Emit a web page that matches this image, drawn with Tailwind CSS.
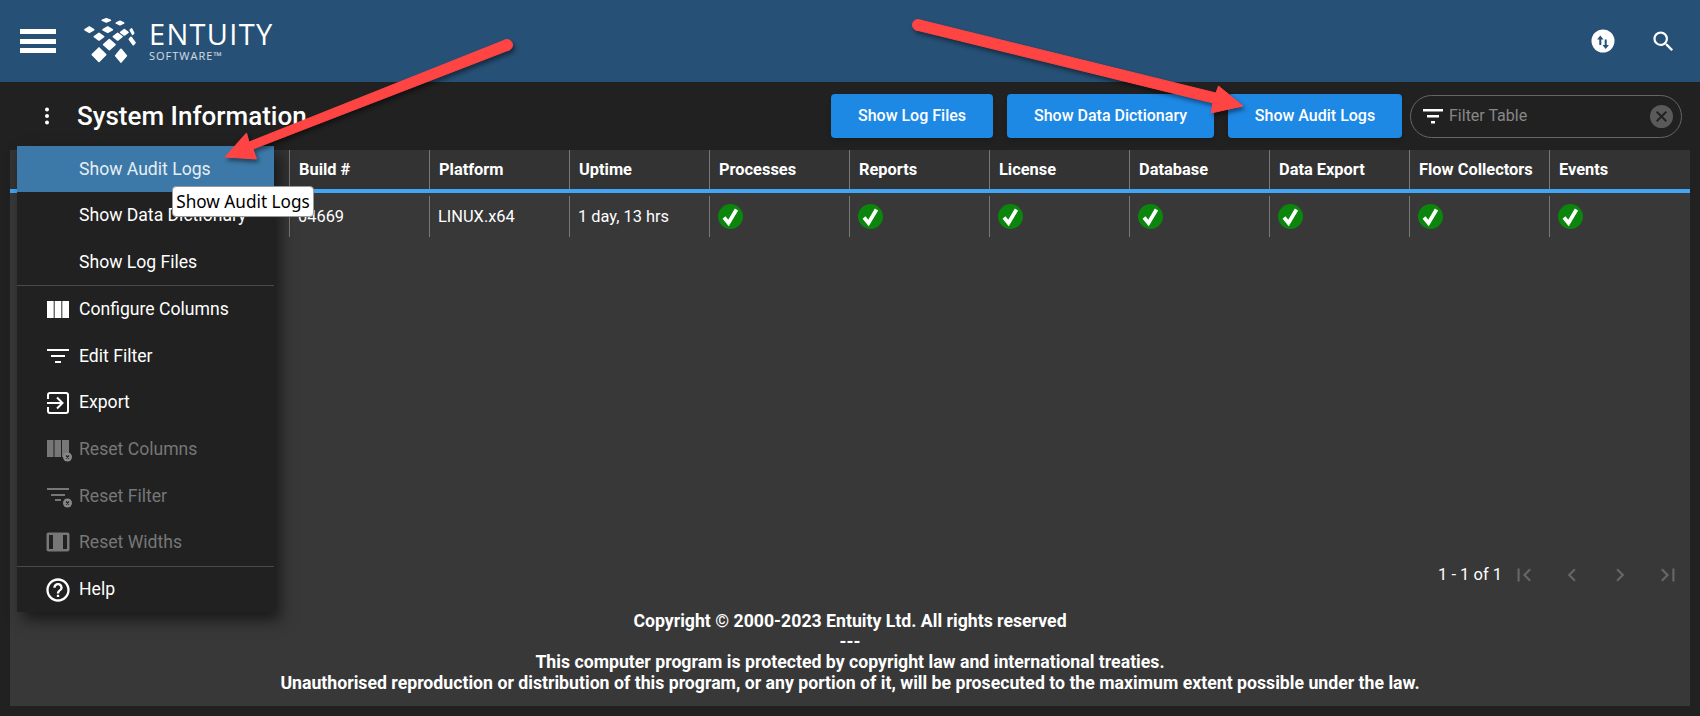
<!DOCTYPE html>
<html lang="en">
<head>
  <meta charset="UTF-8">
  <title>System Information</title>
  <script src="https://cdn.jsdelivr.net/npm/@tailwindcss/browser@4"></script>
</head>
<body class="bg-[#212121] font-['Roboto',sans-serif] text-white w-[1700px] h-[716px] overflow-hidden relative">
  <!-- Top bar -->
  <header class="h-[82px] bg-[#265075] flex items-center pl-5 pr-[23px]">
    <div class="w-9 h-6 flex flex-col justify-between">
      <div class="h-[5px] bg-white"></div>
      <div class="h-[5px] bg-white"></div>
      <div class="h-[5px] bg-white"></div>
    </div>
    <svg class="ml-[19px] w-[70px] h-[60px] -mt-[2px]" viewBox="0 0 210 180" fill="#fff" stroke="#fff" stroke-width="5" stroke-linejoin="round">
      <path d="M82 31l12-5 12 5-12 5z"/>
      <path d="M124 39l11-5 11 5-11 5z"/>
      <path d="M30 59l13-8 13 8-13 8z"/>
      <path d="M84 59l14-8 14 8-14 8z"/>
      <path d="M137 67l11-8 11 8-11 8z"/>
      <path d="M166 60l4-3 6 12-3 4z"/>
      <path d="M58 80l14-10 14 10-14 10z"/>
      <path d="M115 80l13-10 13 10-13 10z"/>
      <path d="M163 88l5-6 12 16-5 6z"/>
      <path d="M86 104l17-15 17 15-17 15z"/>
      <path d="M52 134l20-20 20 20-20 20z"/>
      <path d="M122 137l16-19 16 19-16 19z"/>
    </svg>
    <div class="ml-[4px] flex flex-col">
      <span class="font-['Open_Sans',sans-serif] text-[29px] leading-[28px] tracking-[1.300px]">ENTUITY</span>
      <span class="mt-[2px] font-['Open_Sans',sans-serif] text-[11px] leading-[12px] tracking-[1px] text-white/80">SOFTWARE™</span>
    </div>
    <div class="ml-auto flex items-center gap-[35px]">
      <svg class="w-6 h-6" viewBox="0 0 24 24"><circle cx="12" cy="12" r="11.500" fill="#fff"/><path d="M9.300 6.500l-3.200 4h2.200v5.500h2v-5.500h2.200zM14.700 20l3.200-4h-2.200v-5.500h-2V16h-2.200z" fill="#265075"/></svg>
      <svg class="w-[27px] h-[27px]" viewBox="0 0 24 24" fill="#fff"><path d="M15.500 14h-.79l-.28-.27A6.470 6.470 0 0 0 16 9.500 6.500 6.500 0 1 0 9.500 16c1.610 0 3.090-.59 4.230-1.570l.27.28v.79l5 4.990L20.490 19zm-6 0C7.010 14 5 11.990 5 9.500S7.010 5 9.500 5 14 7.010 14 9.500 11.990 14 9.500 14z"/></svg>
    </div>
  </header>

  <!-- Title and actions -->
  <div class="h-[68px] flex items-center pl-[35px] pr-[18px]">
    <svg class="w-6 h-6" viewBox="0 0 24 24" fill="#fff"><circle cx="12" cy="5.500" r="2"/><circle cx="12" cy="12" r="2"/><circle cx="12" cy="18.500" r="2"/></svg>
    <h1 class="ml-[18px] text-[26px] font-medium">System Information</h1>
    <div class="ml-auto flex items-center">
      <button class="w-[162px] h-11 bg-[#1e88e5] rounded text-base font-medium shadow-md">Show Log Files</button>
      <button class="ml-[14px] w-[207px] h-11 bg-[#1e88e5] rounded text-base font-medium shadow-md">Show Data Dictionary</button>
      <button class="ml-[14px] w-[174px] h-11 bg-[#1e88e5] rounded text-base font-medium shadow-md">Show Audit Logs</button>
      <div class="ml-2 w-[272px] h-[43px] rounded-full border border-[#666] flex items-center pl-[10px] pr-2">
        <svg class="w-6 h-6" viewBox="0 0 24 24" fill="#fff"><path d="M2 5h20v2.500H2zM6 11h12v2.500H6zM10 17h4v2.500h-4z"/></svg>
        <span class="ml-[4px] text-base text-[#888]">Filter Table</span>
        <svg class="ml-auto w-[23px] h-[23px]" viewBox="0 0 24 24"><circle cx="12" cy="12" r="12" fill="#5a5a5a"/><path d="M7 7l10 10M17 7L7 17" stroke="#212121" stroke-width="2"/></svg>
      </div>
    </div>
  </div>

  <!-- Table card -->
  <main class="mx-[10px] h-[556px] bg-[#383838] flex flex-col">
    <div class="h-[39px] bg-[#333] pl-[279px] grid grid-cols-[repeat(10,140px)] text-[16.400px] font-bold">
      <div class="border-l border-[#777] px-[9px] leading-[39px]">Build #</div>
      <div class="border-l border-[#777] px-[9px] leading-[39px]">Platform</div>
      <div class="border-l border-[#777] px-[9px] leading-[39px]">Uptime</div>
      <div class="border-l border-[#777] px-[9px] leading-[39px]">Processes</div>
      <div class="border-l border-[#777] px-[9px] leading-[39px]">Reports</div>
      <div class="border-l border-[#777] px-[9px] leading-[39px]">License</div>
      <div class="border-l border-[#777] px-[9px] leading-[39px]">Database</div>
      <div class="border-l border-[#777] px-[9px] leading-[39px]">Data Export</div>
      <div class="border-l border-[#777] px-[9px] leading-[39px]">Flow Collectors</div>
      <div class="border-l border-[#777] px-[9px] leading-[39px]">Events</div>
    </div>
    <div class="h-1 bg-[#42a5f5]"></div>
    <div class="mt-[3px] h-[41px] pl-[279px] grid grid-cols-[repeat(10,140px)] text-[16.400px]">
      <div class="border-l border-[#777] px-2 leading-[41px]">04669</div>
      <div class="border-l border-[#777] px-2 leading-[41px]">LINUX.x64</div>
      <div class="border-l border-[#777] px-2 leading-[41px]">1 day, 13 hrs</div>
      <div class="border-l border-[#777] px-2 flex items-center"><svg class="w-[25px] h-[25px]" viewBox="0 0 25 25"><circle cx="12.500" cy="12.500" r="12.500" fill="#0b850b"/><path d="M6 13.500l4.500 5.500 8-13.500" fill="none" stroke="#fff" stroke-width="3.800"/></svg></div>
      <div class="border-l border-[#777] px-2 flex items-center"><svg class="w-[25px] h-[25px]" viewBox="0 0 25 25"><circle cx="12.500" cy="12.500" r="12.500" fill="#0b850b"/><path d="M6 13.500l4.500 5.500 8-13.500" fill="none" stroke="#fff" stroke-width="3.800"/></svg></div>
      <div class="border-l border-[#777] px-2 flex items-center"><svg class="w-[25px] h-[25px]" viewBox="0 0 25 25"><circle cx="12.500" cy="12.500" r="12.500" fill="#0b850b"/><path d="M6 13.500l4.500 5.500 8-13.500" fill="none" stroke="#fff" stroke-width="3.800"/></svg></div>
      <div class="border-l border-[#777] px-2 flex items-center"><svg class="w-[25px] h-[25px]" viewBox="0 0 25 25"><circle cx="12.500" cy="12.500" r="12.500" fill="#0b850b"/><path d="M6 13.500l4.500 5.500 8-13.500" fill="none" stroke="#fff" stroke-width="3.800"/></svg></div>
      <div class="border-l border-[#777] px-2 flex items-center"><svg class="w-[25px] h-[25px]" viewBox="0 0 25 25"><circle cx="12.500" cy="12.500" r="12.500" fill="#0b850b"/><path d="M6 13.500l4.500 5.500 8-13.500" fill="none" stroke="#fff" stroke-width="3.800"/></svg></div>
      <div class="border-l border-[#777] px-2 flex items-center"><svg class="w-[25px] h-[25px]" viewBox="0 0 25 25"><circle cx="12.500" cy="12.500" r="12.500" fill="#0b850b"/><path d="M6 13.500l4.500 5.500 8-13.500" fill="none" stroke="#fff" stroke-width="3.800"/></svg></div>
      <div class="border-l border-[#777] px-2 flex items-center"><svg class="w-[25px] h-[25px]" viewBox="0 0 25 25"><circle cx="12.500" cy="12.500" r="12.500" fill="#0b850b"/><path d="M6 13.500l4.500 5.500 8-13.500" fill="none" stroke="#fff" stroke-width="3.800"/></svg></div>
    </div>
    <!-- Pagination -->
    <div class="mt-auto flex items-center justify-end pr-[9px]">
      <span class="text-[16.500px] mr-[9px]">1 - 1 of 1</span>
      <svg class="w-[26px] h-[26px]" viewBox="0 0 24 24" fill="#666"><path d="M18.410 16.590L13.820 12l4.590-4.590L17 6l-6 6 6 6zM6 6h2v12H6z"/></svg>
      <svg class="ml-[22px] w-[26px] h-[26px]" viewBox="0 0 24 24" fill="#666"><path d="M15.410 7.410L14 6l-6 6 6 6 1.410-1.410L10.830 12z"/></svg>
      <svg class="ml-[22px] w-[26px] h-[26px]" viewBox="0 0 24 24" fill="#666"><path d="M10 6L8.590 7.410 13.170 12l-4.580 4.590L10 18l6-6z"/></svg>
      <svg class="ml-[22px] w-[26px] h-[26px]" viewBox="0 0 24 24" fill="#666"><path d="M5.590 7.410L10.180 12l-4.590 4.590L7 18l6-6-6-6zM16 6h2v12h-2z"/></svg>
    </div>
    <!-- Copyright -->
    <footer class="mt-[23px] mb-[13px] text-center text-[17.700px] font-bold leading-[20.500px]">
      <p>Copyright © 2000-2023 Entuity Ltd. All rights reserved</p>
      <p>---</p>
      <p>This computer program is protected by copyright law and international treaties.</p>
      <p>Unauthorised reproduction or distribution of this program, or any portion of it, will be prosecuted to the maximum extent possible under the law.</p>
    </footer>
  </main>

  <!-- Dropdown menu -->
  <nav class="absolute left-[17px] top-[146px] w-[257px] h-[466px] bg-[#212121] shadow-[6px_8px_14px_rgba(0,0,0,.55)] text-[17.600px]">
    <div class="h-[46px] pl-[62px] flex items-center bg-[#3c79a8] text-[#e6eef4]">Show Audit Logs</div>
    <div class="h-[46.600px] pl-[62px] flex items-center">Show Data Dictionary</div>
    <div class="h-[46.600px] pl-[62px] flex items-center">Show Log Files</div>
    <div class="h-px bg-[#4a4a4a]"></div>
    <div class="h-[46.600px] pl-[30px] flex items-center">
      <svg class="w-[22px] h-[17px] mr-[10px]" viewBox="0 0 22 17" fill="#fff"><path d="M0 0h6.700v17H0zM7.650 0h6.700v17h-6.700zM15.300 0H22v17h-6.700z"/></svg>Configure Columns
    </div>
    <div class="h-[46.600px] pl-[30px] flex items-center">
      <svg class="w-[22px] h-[16px] mr-[10px]" viewBox="0 0 22 16" fill="#fff"><path d="M0 1h22v2H0zM4 7h14v2H4zM8 13h6v2H8z"/></svg>Edit Filter
    </div>
    <div class="h-[46.600px] pl-[30px] flex items-center">
      <svg class="w-[22px] h-[22px] mr-[10px]" viewBox="0 0 22 22" fill="none" stroke="#fff" stroke-width="2"><path d="M1 7V3a2 2 0 0 1 2-2h16a2 2 0 0 1 2 2v16a2 2 0 0 1-2 2H3a2 2 0 0 1-2-2v-4M0 11h15M10 5.500l5.500 5.500-5.500 5.500"/></svg>Export
    </div>
    <div class="h-[46.600px] pl-[30px] flex items-center text-[#777]">
      <svg class="w-[26px] h-[26px] mr-[6px]" viewBox="0 0 26 26"><path d="M0 4h6.500v17H0zM7.500 4H14v17H7.500zM15 4h7v13l-3 4h-4z" fill="#777"/><circle cx="20.500" cy="21" r="4.500" fill="#888"/><path d="M19 19.500l3 3M22 19.500l-3 3" stroke="#212121" stroke-width="1.200"/></svg>Reset Columns
    </div>
    <div class="h-[46.600px] pl-[30px] flex items-center text-[#777]">
      <svg class="w-[26px] h-[26px] mr-[6px]" viewBox="0 0 26 26"><path d="M0 5h22v2H0zM4 11h14v2H4zM8 16h6v2H8z" fill="#777"/><circle cx="20.500" cy="20" r="4.500" fill="#888"/><path d="M19 18.500l3 3M22 18.500l-3 3" stroke="#212121" stroke-width="1.200"/></svg>Reset Filter
    </div>
    <div class="h-[46.600px] pl-[29px] flex items-center text-[#777]">
      <svg class="w-[24px] h-[20px] mr-[9px]" viewBox="0 0 24 20"><rect x="0.500" y="0.500" width="23" height="19" rx="2" fill="#777"/><path d="M3 3h4v14H3zM17 3h4v14h-4z" fill="#212121"/></svg>Reset Widths
    </div>
    <div class="h-px bg-[#4a4a4a]"></div>
    <div class="h-[45.500px] pl-[27px] flex items-center">
      <svg class="w-[28px] h-[28px] mr-[7px]" viewBox="0 0 24 24" fill="#fff"><path d="M11 18h2v-2h-2zm1-16C6.480 2 2 6.480 2 12s4.480 10 10 10 10-4.480 10-10S17.520 2 12 2zm0 18c-4.410 0-8-3.590-8-8s3.590-8 8-8 8 3.590 8 8-3.590 8-8 8zm0-14c-2.210 0-4 1.790-4 4h2c0-1.100.9-2 2-2s2 .9 2 2c0 2-3 1.750-3 5h2c0-2.250 3-2.500 3-5 0-2.210-1.790-4-4-4z"/></svg>Help
    </div>
  </nav>

  <!-- Tooltip -->
  <div class="absolute left-[172px] top-[186px] w-[142px] h-[31px] bg-white border border-[#999] rounded text-black text-[17.200px] font-['Noto_Sans',sans-serif] flex items-center justify-center">Show Audit Logs</div>

  <!-- Annotation arrows -->
  <svg class="absolute inset-0 pointer-events-none" width="1700" height="716" viewBox="0 0 1700 716">
    <g fill="#ff4444" stroke="#ff4444" stroke-width="1" stroke-linejoin="round" style="filter: drop-shadow(2px 3px 2px rgba(0,0,0,.45))">
      <circle cx="507" cy="45" r="5.500"/>
      <path d="M505 40L249 142 246.500 133 225 157 256.500 159 253 149 509 50z"/>
    </g>
    <g fill="#ff4444" stroke="#ff4444" stroke-width="1" stroke-linejoin="round" style="filter: drop-shadow(2px 3px 2px rgba(0,0,0,.45))">
      <circle cx="918" cy="25" r="5.500"/>
      <path d="M920 20L1216 93 1218.500 86 1243 106 1211 113 1213 103 916 30z"/>
    </g>
  </svg>
</body>
</html>
